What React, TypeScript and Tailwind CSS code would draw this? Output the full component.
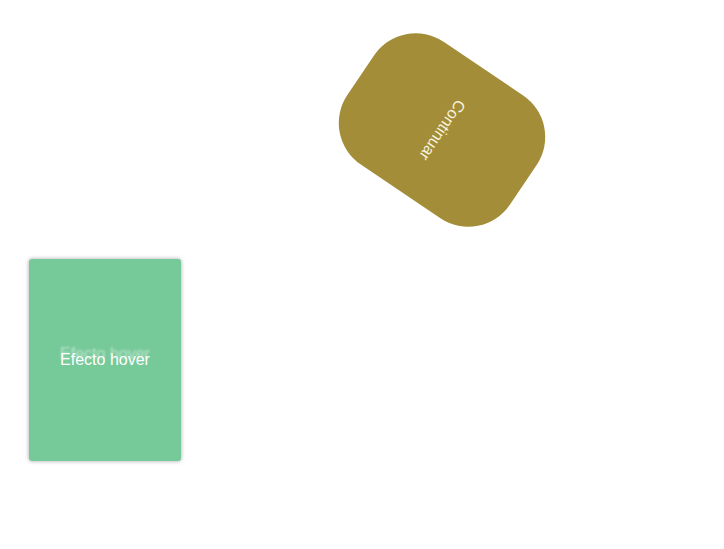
import React from 'react'

const App = () => {
    return (
        <div className="min-h-screen bg-white" style={{ fontFamily: '"Liberation Sans", Arial, sans-serif' }}>
            <div className="pt-[32px] pl-[368px]">
                <button className="flex items-center justify-center w-[148px] h-[196px] rounded-[50px] bg-[#a38d38] text-[#f8f3dc] text-[16px] rotate-[124deg] outline-none border-none">
                    Continuar
                </button>
            </div>

            <div className="mt-[31px] ml-[29px] relative flex items-center justify-center w-[152px] h-[202px] rounded-[3px] bg-[#76c999] shadow-[0_0_4px_rgba(0,0,0,0.35)]">
                <span className="absolute text-white text-[16px] opacity-50 blur-[1px] -translate-y-[6px]">Efecto hover</span>
                <span className="relative text-white text-[16px]">Efecto hover</span>
            </div>
        </div>
    )
}

export default App
